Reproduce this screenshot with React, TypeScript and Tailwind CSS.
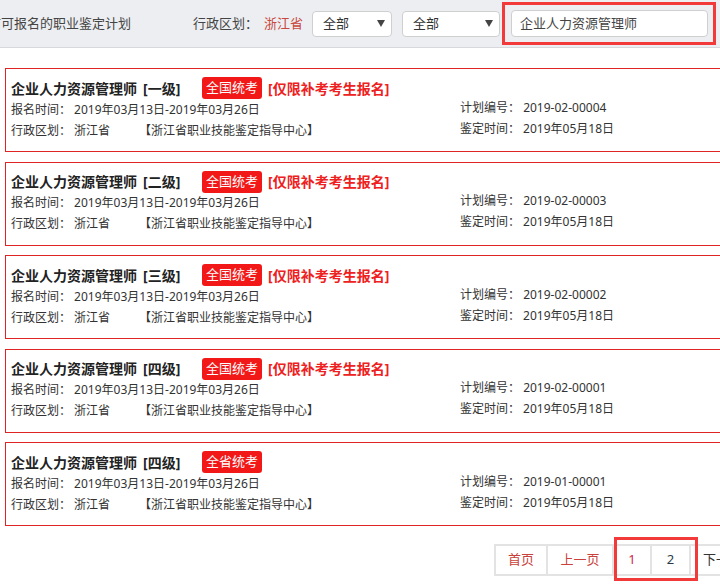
const plans = [
  { level: "一级", badge: "全国统考", retake: true, no: "2019-02-00004" },
  { level: "二级", badge: "全国统考", retake: true, no: "2019-02-00003" },
  { level: "三级", badge: "全国统考", retake: true, no: "2019-02-00002" },
  { level: "四级", badge: "全国统考", retake: true, no: "2019-02-00001" },
  { level: "四级", badge: "全省统考", retake: false, no: "2019-01-00001" },
];

function Caret() {
  return (
    <svg width="8" height="7" viewBox="0 0 8 7" className="shrink-0">
      <path d="M0 0h8L4 7z" fill="#444" />
    </svg>
  );
}

function Select({ width }: { width: string }) {
  return (
    <div
      className={`${width} h-[26px] flex items-center justify-between pl-[10px] pr-[6px] bg-white border border-[#cfcfcf] rounded-[4px] text-[13px] text-[#333]`}
    >
      <span>全部</span>
      <Caret />
    </div>
  );
}

export default function App() {
  return (
    <div
      className="w-[720px] h-[585px] overflow-hidden bg-white text-[#333]"
      style={{ fontFamily: '"Noto Sans", "Noto Sans CJK SC", sans-serif' }}
    >
      {/* filter bar */}
      <div className="relative h-[48px] flex items-center bg-[#eceef1] border-b border-[#d6d8db] text-[13px]">
        <div className="ml-[-12px] w-[205px] shrink-0 whitespace-nowrap text-[#444]">前可报名的职业鉴定计划</div>
        <span className="text-[#444]">行政区划：</span>
        <span className="ml-[6px] text-[#c9473f]">浙江省</span>
        <div className="ml-[9px]">
          <Select width="w-[80px]" />
        </div>
        <div className="ml-[10px]">
          <Select width="w-[98px]" />
        </div>
        <div className="ml-[11px] w-[197px] h-[27px] flex items-center px-[8px] bg-white border border-[#cfcfcf] rounded-[4px] text-[#444]">
          企业人力资源管理师
        </div>
        <div className="absolute left-[502px] top-[2px] w-[214px] h-[43px] border-[3px] border-[#f23a3a]" />
      </div>

      {/* plan list */}
      <div className="ml-[5px] mt-[20px] w-[740px] flex flex-col gap-[9.5px]">
        {plans.map((p, i) => (
          <div key={i} className="h-[84px] flex border border-[#e02424] pl-[5px] text-[12px]">
            <div className="w-[449px] shrink-0 pt-[8px]">
              <div className="h-[22px] flex items-center">
                <span className="w-[191px] shrink-0 text-[14px] font-bold text-[#222]">
                  企业人力资源管理师<span className="ml-[6px]">[{p.level}]</span>
                </span>
                <span className="h-[22px] px-[4px] flex items-center rounded-[3px] bg-[#f21818] text-white text-[13px]">{p.badge}</span>
                {p.retake && (
                  <span className="ml-[6px] text-[14px] font-bold text-[#ee2020]">[仅限补考考生报名]</span>
                )}
              </div>
              <div className="h-[21px] flex items-center">报名时间：&nbsp;2019年03月13日-2019年03月26日</div>
              <div className="h-[21px] flex items-center">
                <span className="w-[128px] shrink-0">行政区划：&nbsp;浙江省</span>
                <span>【浙江省职业技能鉴定指导中心】</span>
              </div>
            </div>
            <div className="pt-[28px]">
              <div className="h-[21px] flex items-center">计划编号：&nbsp;{p.no}</div>
              <div className="h-[21px] flex items-center">鉴定时间：&nbsp;2019年05月18日</div>
            </div>
          </div>
        ))}
      </div>

      {/* pager */}
      <div className="relative mt-[18px] ml-[494px] w-[300px] flex text-[13px]">
        <div className="shrink-0 w-[54px] h-[32px] flex items-center justify-center border-2 border-[#e3e3e3] text-[#c8413a]">首页</div>
        <div className="shrink-0 -ml-[2px] w-[68px] h-[32px] flex items-center justify-center border-2 border-[#e3e3e3] text-[#c8413a]">上一页</div>
        <div className="shrink-0 -ml-[2px] w-[40px] h-[32px] flex items-center justify-center border-2 border-[#e3e3e3] text-[#d1264a]">1</div>
        <div className="shrink-0 -ml-[2px] w-[41px] h-[32px] flex items-center justify-center border-2 border-[#e3e3e3] text-[#2b3a4a]">2</div>
        <div className="shrink-0 -ml-[2px] w-[68px] h-[32px] flex items-center pl-[12px] border-2 border-[#e3e3e3] text-[#333] whitespace-nowrap">下一页</div>
        <div className="absolute left-[120px] top-[-7px] w-[84px] h-[44px] border-[3px] border-[#f23a3a]" />
      </div>
    </div>
  );
}
